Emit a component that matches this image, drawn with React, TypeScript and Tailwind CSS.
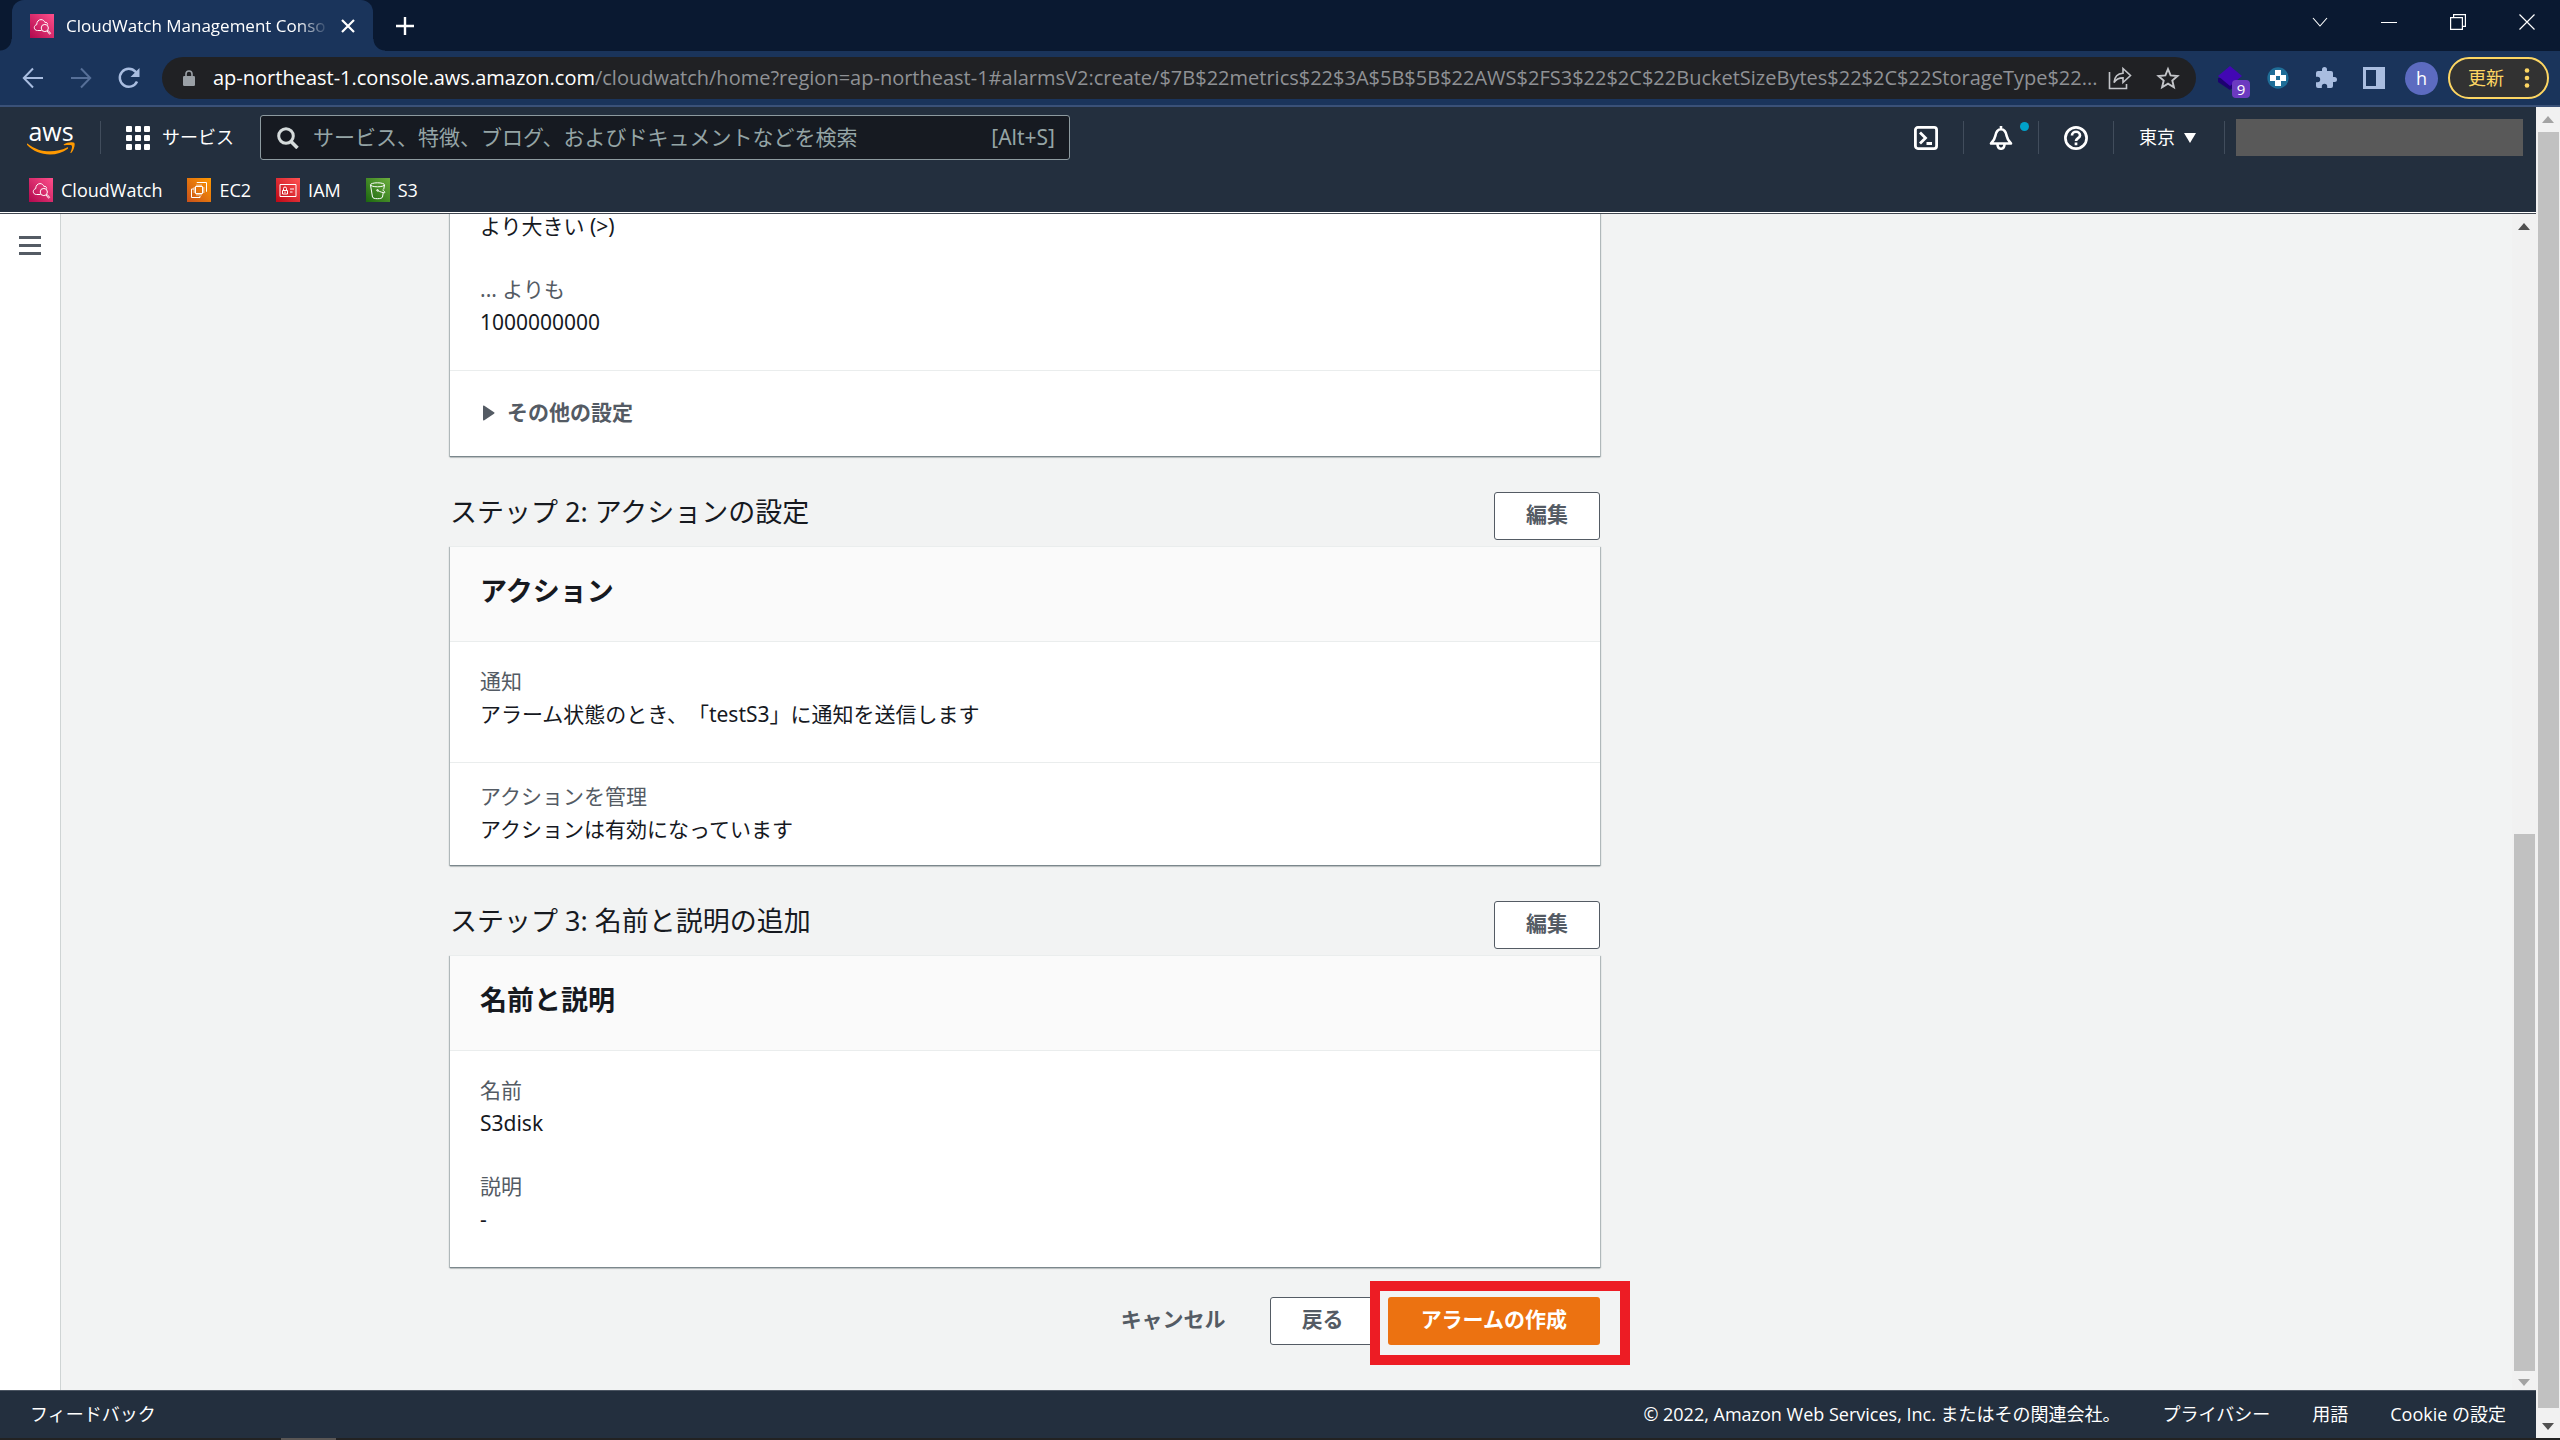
import type { ReactNode } from "react";

const services = [
  { name: "CloudWatch", icon: <CloudWatchIcon /> },
  { name: "EC2", icon: <Ec2Icon /> },
  { name: "IAM", icon: <IamIcon /> },
  { name: "S3", icon: <S3Icon /> },
];

const footerLinks = ["プライバシー", "用語", "Cookie の設定"];

function ServiceTile({ id, from, to, children }: { id: string; from: string; to: string; children: ReactNode }) {
  return (
    <svg viewBox="0 0 24 24" className="size-6 shrink-0" fill="none" stroke="white" strokeWidth="1" aria-hidden="true">
      <defs>
        <linearGradient id={id} x1="0" y1="1" x2="1" y2="0">
          <stop offset="0" stopColor={from} />
          <stop offset="1" stopColor={to} />
        </linearGradient>
      </defs>
      <rect width="24" height="24" fill={`url(#${id})`} stroke="none" />
      {children}
    </svg>
  );
}

function CloudWatchIcon() {
  return (
    <ServiceTile id="cw" from="#b0084d" to="#ff4f8b">
      <path d="M11.5 16.5H7.5C5.6 16.5 4.3 15.3 4.3 13.6c0-1.6 1-2.6 2.4-2.9C6.7 7.6 8.6 5.6 11 5.6c2 0 3.3 1.2 3.9 2.8 1.6-.4 2.7.6 2.8 2.1" />
      <circle cx="14.8" cy="14" r="3.6" />
      <path d="M17 17l2.6 3.2 1-.9-2.6-3" />
    </ServiceTile>
  );
}

function Ec2Icon() {
  return (
    <ServiceTile id="ec2" from="#c8511b" to="#ff9900">
      <path d="M8.5 8.5h7v7h-7zM10 8.5V6.5M12 8.5V6.5M14 8.5V6.5M10 17.5v-2M12 17.5v-2M14 17.5v-2M6.5 10h2M6.5 12h2M6.5 14h2M15.5 10h2M15.5 12h2M15.5 14h2" />
      <path d="M10 5V4.5h9.5v9H19M7 11H4.5v8.5H13V18" />
    </ServiceTile>
  );
}

function IamIcon() {
  return (
    <ServiceTile id="iam" from="#bd0816" to="#ff5252">
      <path d="M4 6.5h16v12H4zM6.5 12.5h5v3.5h-5zM7.5 12.5v-2a1.5 1.5 0 0 1 3 0v2M14 11h4M14 14h2.5M9 13.5v1.5" />
    </ServiceTile>
  );
}

function S3Icon() {
  return (
    <ServiceTile id="s3" from="#1b660f" to="#6cae3e">
      <ellipse cx="11.5" cy="6.8" rx="7" ry="2" />
      <path d="M4.5 7l2 12c.4 1.2 2.2 1.7 5 1.7s4.6-.5 5-1.7l.7-4M18.5 7l-.8 4.5M11.5 12.5c2.5 1.3 5.5 2.3 7 2.2 1.2-.2-.4-1.9-2-2.7" />
      <circle cx="11.5" cy="12.3" r=".8" />
    </ServiceTile>
  );
}

function IconButton({ label, children }: { label: string; children: ReactNode }) {
  return (
    <button type="button" aria-label={label} className="flex size-6 shrink-0 items-center justify-center">
      {children}
    </button>
  );
}

function TabStrip() {
  return (
    <div className="flex h-[51px] shrink-0 items-end bg-[#0a1931] text-white">
      <span className="size-3 bg-[radial-gradient(circle_at_0_0,transparent_11px,#1a345b_12px)]" />
      <div className="flex h-full w-[361px] items-center gap-3 rounded-t-xl bg-[#1a345b] px-[18px]">
        <CloudWatchIcon />
        <span className="w-[263px] whitespace-nowrap text-[17px] leading-7 [mask-image:linear-gradient(to_right,black_88%,transparent)]">
          CloudWatch Management Conso
        </span>
        <button type="button" aria-label="タブを閉じる">
          <svg viewBox="0 0 14 14" className="size-3.5" stroke="white" strokeWidth="2.2">
            <path d="M1 1l12 12M13 1L1 13" />
          </svg>
        </button>
      </div>
      <span className="size-3 bg-[radial-gradient(circle_at_100%_0,transparent_11px,#1a345b_12px)]" />
      <div className="flex h-full flex-1 items-center pl-[11px]">
        <button type="button" aria-label="新しいタブ">
          <svg viewBox="0 0 18 18" className="size-[18px]" stroke="white" strokeWidth="2.4">
            <path d="M9 0v18M0 9h18" />
          </svg>
        </button>
      </div>
      <div className="flex h-[43px] items-center gap-[53px] self-start pr-[25px]">
        <svg viewBox="0 0 16 16" className="size-4" fill="none" stroke="white" strokeWidth="1.1">
          <path d="M1 4l7 8 7-8" />
        </svg>
        <svg viewBox="0 0 16 16" className="size-4" stroke="white">
          <path d="M0 8.5h16" />
        </svg>
        <svg viewBox="0 0 16 16" className="size-4" fill="none" stroke="white" strokeWidth="1.2">
          <path d="M.6 3.6h11.8v11.8H.6zM3.6 3.6V.6h11.8v11.8h-3" />
        </svg>
        <svg viewBox="0 0 16 16" className="size-4" stroke="white" strokeWidth="1.2">
          <path d="M.5.5l15 15M15.5.5l-15 15" />
        </svg>
      </div>
    </div>
  );
}

function Toolbar() {
  return (
    <div className="flex h-14 shrink-0 items-center border-b-2 border-[#3a5178] bg-[#1a345b] pl-[21px] pr-[11px]">
      <div className="flex gap-6">
        <IconButton label="戻る">
          <svg viewBox="0 0 24 24" className="size-6" fill="none" stroke="#a9bde0" strokeWidth="2">
            <path d="M22 12H3M12 2.5L2.8 12l9.2 9.5" />
          </svg>
        </IconButton>
        <IconButton label="進む">
          <svg viewBox="0 0 24 24" className="size-6" fill="none" stroke="#566f98" strokeWidth="2">
            <path d="M2 12h19M12 2.5l9.2 9.5-9.2 9.5" />
          </svg>
        </IconButton>
        <IconButton label="再読み込み">
          <svg viewBox="0 0 24 24" className="size-6" fill="none" stroke="#a9bde0" strokeWidth="2.5">
            <path d="M20 15.5A9 9 0 1 1 18.5 5.7l2.5 3" />
            <path d="M22.5 2v9h-9z" fill="#a9bde0" stroke="none" />
          </svg>
        </IconButton>
      </div>

      <div className="ml-[21px] flex h-[42px] min-w-0 flex-1 items-center rounded-full bg-[#202124] pl-[21px] pr-4">
        <svg viewBox="0 0 12 16" className="h-4 w-3 shrink-0" aria-hidden="true">
          <path d="M3 7V4a3 3 0 0 1 6 0v3" fill="none" stroke="#9aa0a6" strokeWidth="1.6" />
          <rect y="6" width="12" height="10" rx="1.2" fill="#9aa0a6" />
        </svg>
        <div className="ml-[18px] flex-1 overflow-hidden whitespace-nowrap text-[20px] leading-7 text-[#8f9195]">
          <span className="text-white">ap-northeast-1.console.aws.amazon.com</span>
          /cloudwatch/home?region=ap-northeast-1#alarmsV2:create/$7B$22metrics$22$3A$5B$5B$22AWS$2FS3$22$2C$22BucketSizeBytes$22$2C$22StorageType$22...
        </div>
        <div className="flex gap-6">
          <IconButton label="共有">
            <svg viewBox="0 0 24 24" className="size-6" fill="none" stroke="#c3c5c9" strokeWidth="1.6">
              <path d="M1.5 6v16.5h17V18" />
              <path d="M6 16.5C6.5 11 9.5 7.5 15 7.2V2.5l7.5 7-7.5 7v-4.6c-4 0-7 1.4-9 4.6z" />
            </svg>
          </IconButton>
          <IconButton label="ブックマーク">
            <svg viewBox="0 0 24 24" className="size-6" fill="none" stroke="#c3c5c9" strokeWidth="1.9">
              <path d="M12 3l2.6 6.4 6.9.6-5.2 4.5 1.6 6.7-5.9-3.6-5.9 3.6 1.6-6.7L2.5 10l6.9-.6z" />
            </svg>
          </IconButton>
        </div>
      </div>

      <div className="ml-[22px] flex gap-6">
        <div className="relative">
          <svg viewBox="0 0 24 24" className="size-6">
            <path d="M0 12v4l12 8 4-3V12z" fill="#1d0270" />
            <path d="M12 0l12 10-12 10L0 10z" fill="#4207b4" />
          </svg>
          <span className="absolute left-3.5 top-3.5 flex size-[18px] items-center justify-center rounded-sm bg-[#6c3ac0] text-[15px] leading-none text-white">
            9
          </span>
        </div>
        <svg viewBox="0 0 24 24" className="size-6">
          <circle cx="12" cy="12" r="10.7" fill="#1f6d97" />
          <path d="M9 4h6v5h5v6h-5v5H9v-5H4V9h5z" fill="white" />
          <path d="M10 10h4v4h-4z" fill="#1f6d97" />
        </svg>
        <IconButton label="拡張機能">
          <svg viewBox="0 0 24 24" className="size-6" fill="#a9bde0">
            <path d="M20.5 11H19V7a2 2 0 0 0-2-2h-4V3.5a2.5 2.5 0 0 0-5 0V5H4a2 2 0 0 0-2 2v3.8h1.5a2.7 2.7 0 0 1 0 5.4H2V20a2 2 0 0 0 2 2h3.8v-1.5a2.7 2.7 0 0 1 5.4 0V22H17a2 2 0 0 0 2-2v-4h1.5a2.5 2.5 0 0 0 0-5z" />
          </svg>
        </IconButton>
        <IconButton label="サイドパネル">
          <svg viewBox="0 0 24 24" className="size-6">
            <path d="M1 1h22v22H1z" fill="#a9bde0" />
            <path d="M4 4h10v16H4z" fill="#1a345b" />
          </svg>
        </IconButton>
      </div>
      <button type="button" className="ml-[19px] size-[33px] rounded-full bg-[#5c6bc0] text-[18px] leading-none text-white">
        h
      </button>
      <button
        type="button"
        className="ml-2.5 flex h-[42px] w-[101px] items-center justify-between whitespace-nowrap rounded-full border-2 border-[#fdd663] bg-[#323232] pl-[18px] pr-[17px] text-[18px] text-[#fdd663]"
      >
        更新
        <svg viewBox="0 0 6 20" className="h-5 w-1.5" fill="#fdd663">
          <circle cx="3" cy="2.5" r="2.3" />
          <circle cx="3" cy="10" r="2.3" />
          <circle cx="3" cy="17.5" r="2.3" />
        </svg>
      </button>
    </div>
  );
}

function NavDivider() {
  return <span className="h-[33px] w-px shrink-0 bg-[#414d5c]" />;
}

function ConsoleHeader() {
  return (
    <header className="shrink-0 border-b border-[#414750] bg-[#232f3e] text-[18px] text-white">
      <div className="border-b border-white">
        <div className="flex h-[61px] items-center">
          <a href="#" className="ml-[27px] flex w-12 flex-col items-center">
            <span className="text-[25px] font-medium leading-[22px]">aws</span>
            <svg viewBox="0 0 48 13" className="h-[13px] w-12" fill="#ff9900" aria-hidden="true">
              <path d="M.3 1.5C8 7.5 15 9.3 23 9.3c6 0 12-1.3 17-3.8 1-.5 1.6.5.8 1.2C36 10.6 29.5 12.5 23 12.5 14 12.5 6 9 .2 3-.4 2.2-.3 1.2.3 1.5z" />
              <path d="M37 2.3C39.5.2 45.5-.3 47.2.8c1.3 1.4-.2 7.5-2.8 10-.6.5-1.2.2-.9-.5.9-2 2-5.5 1.3-6.6-.7-1-4-.7-7.3-.4-.8 0-1.2-.5-.5-1z" />
            </svg>
          </a>
          <span className="w-[25px]" />
          <NavDivider />
          <button type="button" className="ml-[25px] flex items-center gap-3 whitespace-nowrap">
            <svg viewBox="0 0 24 24" className="size-6" fill="white" aria-hidden="true">
              {[0, 9, 18].map((y) => [0, 9, 18].map((x) => <rect key={`${x}-${y}`} x={x} y={y} width="6" height="6" rx="1" />))}
            </svg>
            サービス
          </button>
          <label className="ml-[26px] flex h-[45px] w-[810px] items-center rounded-[3px] border border-[#8d9a9f] bg-[#161a21] pl-4 pr-3.5 text-[21px] text-[#95a5a6]">
            <svg viewBox="0 0 22 22" className="size-[22px] shrink-0" fill="none" stroke="#d5dbdb" strokeWidth="3" aria-hidden="true">
              <circle cx="9" cy="9" r="7.3" />
              <path d="M14 14.5l6.5 6.5" strokeWidth="3.5" />
            </svg>
            <input
              type="search"
              aria-label="検索"
              placeholder="サービス、特徴、ブログ、およびドキュメントなどを検索"
              className="ml-3.5 min-w-0 flex-1 bg-transparent outline-none placeholder:text-[#95a5a6]"
            />
            <span className="font-['Noto_Sans',sans-serif]">[Alt+S]</span>
          </label>

          <div className="ml-auto flex items-center gap-[25px]">
            <IconButton label="CloudShell">
              <svg viewBox="0 0 24 24" className="size-6" fill="none" stroke="white" strokeWidth="2.8">
                <rect x="1.4" y="1.4" width="21.2" height="21.2" rx="2.5" />
                <path d="M6 6.5l5.5 5.5L6 17.5M12.5 17.5H18" />
              </svg>
            </IconButton>
            <NavDivider />
            <div className="relative">
              <IconButton label="通知">
                <svg viewBox="0 0 24 24" className="size-6" fill="none" stroke="white" strokeWidth="2.6" strokeLinejoin="round">
                  <path d="M12 0v3M2 17.5h20c-2.5-2.5-3.7-4-4.3-7.5C17 6 15 3.3 12 3.3S7 6 6.3 10C5.7 13.5 4.5 15 2 17.5z" />
                  <path d="M8.5 18c0 6.3 7 6.3 7 0" />
                </svg>
              </IconButton>
              <span className="absolute -right-4 -top-1 size-[9px] rounded-full bg-[#00a1c9]" />
            </div>
            <NavDivider />
            <IconButton label="ヘルプ">
              <svg viewBox="0 0 24 24" className="size-6" fill="none" stroke="white" strokeWidth="2.7">
                <circle cx="12" cy="12" r="10.6" />
                <path d="M8 9.5c0-5 8-5 8 0 0 2.6-4 2.7-4 5.5M12 16.5v2.8" />
              </svg>
            </IconButton>
            <NavDivider />
            <button type="button" className="flex items-center gap-[9px] whitespace-nowrap pr-[3px]">
              東京
              <svg viewBox="0 0 12 10" className="h-2.5 w-3" fill="white" aria-hidden="true">
                <path d="M0 0h12L6 10z" />
              </svg>
            </button>
            <NavDivider />
          </div>
          <div className="ml-[11px] mr-[13px] h-[37px] w-[287px] bg-[#595959]" />
        </div>

        <nav className="flex h-11 items-center gap-[25px] pl-[29px]">
          {services.map((service) => (
            <a key={service.name} href="#" className="flex items-center gap-2 font-medium leading-6">
              {service.icon}
              {service.name}
            </a>
          ))}
        </nav>
      </div>
    </header>
  );
}

function Card({ title, children }: { title?: string; children: ReactNode }) {
  return (
    <section className="border-t border-[#eaeded] bg-white shadow-[0_1px_0_0_#7b878c,0_2px_1px_0_rgba(0,28,36,0.15),1px_1px_1px_0_rgba(0,28,36,0.25),-1px_1px_1px_0_rgba(0,28,36,0.25)]">
      {title && (
        <h3 className="border-b border-[#eaeded] bg-[#fafafa] px-[30px] pb-[34px] pt-[27px] text-[27px] font-bold leading-[33px]">
          {title}
        </h3>
      )}
      {children}
    </section>
  );
}

function Field({ label, value }: { label?: string; value: string }) {
  return (
    <div>
      {label && <dt className="text-[#545b64]">{label}</dt>}
      <dd>{value}</dd>
    </div>
  );
}

function StepHeading({ title }: { title: string }) {
  return (
    <div className="mb-1.5 mt-9 flex items-start justify-between">
      <h2 className="text-[27px] leading-10">{title}</h2>
      <OutlineButton>編集</OutlineButton>
    </div>
  );
}

function OutlineButton({ children }: { children: ReactNode }) {
  return (
    <button
      type="button"
      className="h-12 whitespace-nowrap rounded-[3px] border border-[#545b64] bg-white px-[31px] pb-1 font-bold text-[#545b64]"
    >
      {children}
    </button>
  );
}

function ReviewPage() {
  return (
    <main className="flex min-w-0 flex-1 flex-col justify-end overflow-hidden bg-[#f2f3f3] pb-[45px] pl-[389px] text-[21px] leading-[33px] text-[#16191f]">
      <div className="w-[1150px] shrink-0">
        <Card>
          <dl className="flex flex-col gap-[30px] border-b border-[#eaeded] px-[30px] pb-[31px]">
            <Field value="より大きい (>)" />
            <Field label="... よりも" value="1000000000" />
          </dl>
          <button type="button" className="flex items-center gap-3 px-8 pb-[27px] pt-[25px] font-bold text-[#545b64]">
            <svg viewBox="0 0 13 16" className="h-4 w-[13px]" fill="#545b64" aria-hidden="true">
              <path d="M1 1.5C1 .5 1.5.3 2.3.8L12 7.3c.7.5.7.9 0 1.4l-9.7 6.5c-.8.5-1.3.3-1.3-.7z" />
            </svg>
            その他の設定
          </button>
        </Card>

        <StepHeading title="ステップ 2: アクションの設定" />
        <Card title="アクション">
          <dl className="border-b border-[#eaeded] px-[30px] pb-[31px] pt-[23px]">
            <Field label="通知" value="アラーム状態のとき、「testS3」に通知を送信します" />
          </dl>
          <dl className="px-[30px] pb-[19px] pt-[17px]">
            <Field label="アクションを管理" value="アクションは有効になっています" />
          </dl>
        </Card>

        <StepHeading title="ステップ 3: 名前と説明の追加" />
        <Card title="名前と説明">
          <dl className="flex flex-col gap-[30px] px-[30px] pb-[31px] pt-[23px]">
            <Field label="名前" value="S3disk" />
            <Field label="説明" value="-" />
          </dl>
        </Card>

        <div className="mt-[30px] flex items-center justify-end">
          <button type="button" className="mr-11 pb-1 font-bold text-[#545b64]">
            キャンセル
          </button>
          <OutlineButton>戻る</OutlineButton>
          <div className="relative ml-3">
            <button type="button" className="h-12 whitespace-nowrap rounded-[3px] bg-[#ec7211] px-[33px] pb-1 font-bold text-white">
              アラームの作成
            </button>
            <span className="pointer-events-none absolute -bottom-5 -left-[18px] -right-[30px] -top-4 border-10 border-[#ed1c24]" />
          </div>
        </div>
      </div>
    </main>
  );
}

function InnerScrollbar() {
  return (
    <div className="flex w-6 shrink-0 flex-col items-center bg-[#f1f1f1]" aria-hidden="true">
      <svg viewBox="0 0 12 26" className="h-[26px] w-3 shrink-0" fill="#505050">
        <path d="M6 9l6 7H0z" />
      </svg>
      <div className="flex-[594]" />
      <div className="w-[21px] flex-[537] bg-[#c1c1c1]" />
      <svg viewBox="0 0 12 19" className="h-[19px] w-3 shrink-0" fill="#a3a3a3">
        <path d="M6 15l6-7H0z" />
      </svg>
    </div>
  );
}

function OuterScrollbar() {
  return (
    <div className="flex w-6 shrink-0 flex-col items-center bg-[#f1f1f1]" aria-hidden="true">
      <svg viewBox="0 0 12 25" className="h-[25px] w-3 shrink-0" fill="#a3a3a3">
        <path d="M6 9l6 7H0z" />
      </svg>
      <div className="w-[21px] flex-1 bg-[#c1c1c1]" />
      <svg viewBox="0 0 12 30" className="h-[30px] w-3 shrink-0" fill="#505050">
        <path d="M6 22l6-7H0z" />
      </svg>
    </div>
  );
}

export default function App() {
  return (
    <div className="flex h-screen flex-col overflow-hidden font-['Open_Sans','Noto_Sans_CJK_JP',sans-serif] [text-spacing-trim:space-all]">
      <TabStrip />
      <Toolbar />
      <div className="flex min-h-0 flex-1">
        <div className="flex min-w-0 flex-1 flex-col">
          <ConsoleHeader />
          <div className="flex min-h-0 flex-1 font-['Noto_Sans','Noto_Sans_CJK_JP',sans-serif]">
            <aside className="w-[61px] shrink-0 border-r border-[#cfd4d4] bg-white pl-[19px] pt-[22px]">
              <button type="button" aria-label="メニュー" className="flex w-[22px] flex-col gap-[5px]">
                <span className="h-[3px] w-full bg-[#545b64]" />
                <span className="h-[3px] w-full bg-[#545b64]" />
                <span className="h-[3px] w-full bg-[#545b64]" />
              </button>
            </aside>
            <ReviewPage />
            <InnerScrollbar />
          </div>
          <footer className="flex h-12 shrink-0 items-center gap-[42px] whitespace-nowrap border-t border-[#4b5562] bg-[#232f3e] px-[30px] text-[18px] text-white">
            <a href="#" className="mr-auto">
              フィードバック
            </a>
            <span>© 2022, Amazon Web Services, Inc. またはその関連会社。</span>
            {footerLinks.map((link) => (
              <a key={link} href="#">
                {link}
              </a>
            ))}
          </footer>
        </div>
        <OuterScrollbar />
      </div>
      <div className="h-0.5 shrink-0 bg-[#222222] pl-[281px]">
        <div className="h-full w-[55px] bg-[#5a5654]" />
      </div>
    </div>
  );
}
